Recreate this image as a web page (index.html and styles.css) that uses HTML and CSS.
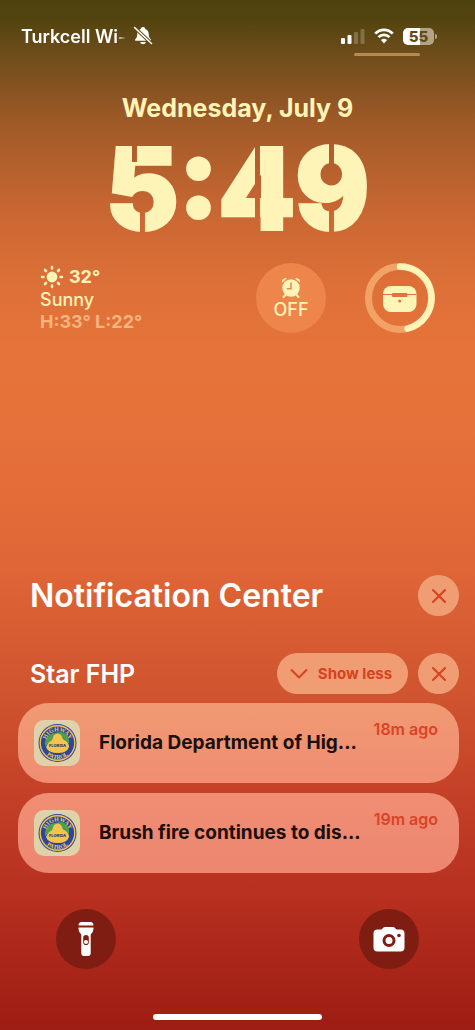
FILE: index.html
```html
<!DOCTYPE html>
<html lang="en">
<head>
    <meta charset="UTF-8">
    <meta name="viewport" content="width=device-width, initial-scale=1.0">
    <title>Lock Screen</title>
    <link rel="stylesheet" href="styles.css">
</head>
<body>

<header class="status-bar">
    <div class="status-left">
        <span class="carrier">Turkcell Wi-</span>
        <svg width="20" height="20" viewBox="0 0 20 20" aria-label="Silent">
            <path d="M10 1C8.600 1 7.800 1.900 7.700 3C5 3.900 4.300 6.200 4.200 8.500C4.100 11 3.500 12 2.300 13.200C1.700 14 2 14.800 3 14.800H17C18 14.800 18.300 14 17.700 13.200C16.500 12 15.900 11 15.800 8.500C15.700 6.200 15 3.900 12.300 3C12.200 1.900 11.400 1 10 1Z" fill="#fff"/>
            <path d="M7.200 16H12.800C12.400 17.500 11.400 18.200 10 18.200S7.600 17.500 7.200 16Z" fill="#fff"/>
            <path d="M1.500 1.500L18.500 17.500" stroke="#65491a" stroke-width="3.600"/>
            <path d="M1.500 1.500L18.500 17.500" stroke="#fff" stroke-width="1.600" stroke-linecap="round"/>
        </svg>
    </div>
    <div class="status-right">
        <svg width="24" height="18" viewBox="0 0 24 18" aria-label="Signal">
            <rect x="0" y="11" width="4" height="6" rx="1" fill="#fff"/>
            <rect x="6.500" y="8" width="4" height="9" rx="1" fill="#fff"/>
            <rect x="13" y="5" width="4" height="12" rx="1" fill="#fff" fill-opacity=".22"/>
            <rect x="19.500" y="2" width="4" height="15" rx="1" fill="#fff" fill-opacity=".22"/>
        </svg>
        <svg width="20" height="16" viewBox="0 0 20 16" aria-label="Wi-Fi">
            <path d="M1.200 5.700C6 .5 14 .5 18.800 5.700" fill="none" stroke="#fff" stroke-width="2.700"/>
            <path d="M4.500 9.100C7.500 6 12.500 6 15.500 9.100" fill="none" stroke="#fff" stroke-width="2.700"/>
            <path d="M6.900 12.100C8.700 10.400 11.300 10.400 13.100 12.100L10 15.400Z" fill="#fff"/>
        </svg>
        <div class="battery"><span>55</span></div>
    </div>
</header>
<div class="status-line"></div>

<main class="lock-screen">
    <div class="date">Wednesday, July 9</div>
    <time class="clock" datetime="05:49"><span class="digit five">5</span><span class="colon">:</span><span class="digit four">4</span><span class="digit nine">9</span></time>

    <section class="widgets">
        <div class="weather">
            <div class="weather-now">
                <svg width="24" height="24" viewBox="0 0 24 24" aria-hidden="true">
                    <circle cx="12" cy="12" r="5.400" fill="#fff4b8"/>
                    <path d="M12 2V3.500M12 20.500V22M2 12H3.500M20.500 12H22M5 5L6 6M18 18L19 19M19 5L18 6M6 18L5 19" stroke="#fff4b8" stroke-width="2.600" stroke-linecap="round"/>
                </svg>
                <span>32°</span>
            </div>
            <div class="weather-text">Sunny</div>
            <div class="weather-range">H:33° L:22°</div>
        </div>
        <div class="alarm">
            <svg width="20" height="22" viewBox="0 0 20 22" aria-label="Alarm">
                <path d="M1.200 5.500C0 3 3 .3 6 1.500ZM18.800 5.500C20 3 17 .3 14 1.500Z" fill="#fff4b8"/>
                <path d="M4.500 18L2.500 20M15.500 18L17.500 20" stroke="#fff4b8" stroke-width="2" stroke-linecap="round"/>
                <circle cx="10" cy="11" r="8.700" fill="#fff4b8"/>
                <path d="M10 6V11.700H6.300" fill="none" stroke="#ee864c" stroke-width="1.500" stroke-linecap="round"/>
            </svg>
            <span>OFF</span>
        </div>
        <svg class="earbuds" viewBox="0 0 70 70" aria-label="Earbuds battery">
            <circle cx="35" cy="35" r="31.500" fill="none" stroke="#f2a265" stroke-width="7"/>
            <path d="M35 3.500A31.500 31.500 0 0 1 42.500 65.600" fill="none" stroke="#fff4b8" stroke-width="6.500" stroke-linecap="round"/>
            <rect x="18" y="23" width="33.500" height="26" rx="8" fill="#fff4b8"/>
            <path d="M18 31.500H51.500" stroke="#e4723a" stroke-width="1"/>
            <rect x="27" y="30" width="15.500" height="4" rx="1" fill="#e4723a"/>
            <circle cx="34.700" cy="38" r="1.500" fill="#e4723a"/>
        </svg>
    </section>

    <section class="notifications">
        <div class="center-header">
            <h1>Notification Center</h1>
            <button class="round-button" aria-label="Clear all">
                <svg width="16" height="16" viewBox="0 0 16 16">
                    <path d="M2 2L14 14M14 2L2 14" fill="none" stroke="currentColor" stroke-width="2" stroke-linecap="round"/>
                </svg>
            </button>
        </div>
        <div class="group-header">
            <h2>Star FHP</h2>
            <button class="show-less">
                <svg width="18" height="12" viewBox="0 0 18 12" aria-hidden="true">
                    <path d="M1.500 2L9 9.500L16.500 2" fill="none" stroke="currentColor" stroke-width="2" stroke-linecap="round" stroke-linejoin="round"/>
                </svg>
                Show less
            </button>
            <button class="round-button" aria-label="Clear Star FHP">
                <svg width="16" height="16" viewBox="0 0 16 16">
                    <path d="M2 2L14 14M14 2L2 14" fill="none" stroke="currentColor" stroke-width="2" stroke-linecap="round"/>
                </svg>
            </button>
        </div>
        <article class="card">
            <svg class="app-icon" viewBox="0 0 46 46" aria-hidden="true">
                <g id="seal">
                    <path id="arc-top" d="M11.700 23A11.800 11.800 0 0 1 35.300 23" fill="none"/>
                    <path id="arc-bottom" d="M7.300 23A16.200 16.200 0 0 0 39.700 23" fill="none"/>
                    <circle cx="23.500" cy="23" r="19" fill="#2f459c"/>
                    <circle cx="23.500" cy="23" r="17.300" fill="#2c469f" stroke="#f0c452" stroke-width="1.400"/>
                    <path d="M11 26C10 19 15 14 20 13L27 12C33 14 36 18 35 24L31 20L26 16L20 17L16 22Z" fill="#4da24a"/>
                    <path d="M20 15Q24 12 27 15L29 19Q35 22 35 27Q33 33 24 33Q14 33 12 27Q14 22 18 20Z" fill="#f4c44c"/>
                    <text class="seal-ring"><textPath href="#arc-top" startOffset="50%" text-anchor="middle">HIGHWAY</textPath></text>
                    <text class="seal-ring"><textPath href="#arc-bottom" startOffset="50%" text-anchor="middle">PATROL</textPath></text>
                    <text class="seal-name" x="23.500" y="27" text-anchor="middle">FLORIDA</text>
                </g>
            </svg>
            <div class="card-title">Florida Department of Hig...</div>
            <time class="card-time">18m ago</time>
        </article>
        <article class="card card-second">
            <svg class="app-icon" viewBox="0 0 46 46" aria-hidden="true"><use href="#seal"/></svg>
            <div class="card-title">Brush fire continues to dis...</div>
            <time class="card-time">19m ago</time>
        </article>
    </section>
</main>

<footer class="dock">
    <button class="dock-button" aria-label="Flashlight">
        <svg width="36" height="36" viewBox="0 0 36 36">
            <path d="M10.500 4.500Q10.500 1 13.500 1H22.500Q25.500 1 25.500 4.500ZM10.500 6.500H25.500V8Q25.500 10.500 22.700 13.500V32Q22.700 35 20 35H16Q13.300 35 13.300 32V13.500Q10.500 10.500 10.500 8Z" fill="#fff"/>
            <rect x="15.200" y="14" width="5.600" height="10" rx="2.800" fill="#801d13"/>
            <circle cx="18" cy="21" r="2" fill="#fff"/>
        </svg>
    </button>
    <button class="dock-button" aria-label="Camera">
        <svg width="36" height="36" viewBox="0 0 36 36">
            <path d="M6.500 8.500H10.500L12.500 6.500Q13 6 14 6H22Q23 6 23.500 6.500L25.500 8.500H29.500Q33.500 8.500 33.500 12.500V26.500Q33.500 30.500 29.500 30.500H6.500Q2.500 30.500 2.500 26.500V12.500Q2.500 8.500 6.500 8.500Z" fill="#fff"/>
            <circle cx="18" cy="19.500" r="5" fill="#fff" stroke="#801d13" stroke-width="3"/>
            <circle cx="28" cy="14.500" r="1.800" fill="#801d13"/>
        </svg>
    </button>
</footer>
<div class="home-bar"></div>

</body>
</html>
```

FILE: styles.css
```css
* {
    box-sizing: border-box;
}
body {
    font-family: Inter, "Liberation Sans", sans-serif;
    display: flex;
    flex-direction: column;
    min-height: 100vh;
    margin: 0;
    color: #fff;
    background: linear-gradient(#4d430f 0%, #54440f 2%, #6c4c1a 5%, #a05a28 12%, #c76632 20%, #dc6f38 27%, #e6743a 34%, #e6713a 42%, #df6637 55%, #cf532f 68%, #c13d26 79%, #b73020 87%, #9d1c13 100%);
}
button {
    font-family: inherit;
    border: none;
    padding: 0;
    cursor: pointer;
}
svg {
    display: block;
}

/* Status bar */
.status-bar {
    display: flex;
    justify-content: space-between;
    align-items: center;
    height: 20px;
    margin: 26px 40px 0 21px;
}
.status-left {
    display: flex;
    align-items: center;
    gap: 7px;
}
.carrier {
    font-size: 18px;
    font-weight: 600;
    white-space: nowrap;
    -webkit-mask-image: linear-gradient(90deg, #000 91%, transparent);
    mask-image: linear-gradient(90deg, #000 91%, transparent);
}
.status-right {
    display: flex;
    align-items: center;
    gap: 9px;
}
.battery {
    position: relative;
    width: 31px;
    height: 17px;
    margin-right: 1px;
    border-radius: 5px;
    background: linear-gradient(90deg, #fff 55%, #b3a486 55%);
    color: #604a18;
    font-size: 15px;
    font-weight: 800;
    line-height: 17px;
    text-align: center;
}
.battery::after {
    content: "";
    position: absolute;
    left: 32px;
    top: 6px;
    width: 2px;
    height: 5px;
    border-radius: 0 2px 2px 0;
    background: #b3a486;
}
.status-line {
    align-self: flex-end;
    width: 66px;
    height: 3px;
    margin: 7px 55px 0 0;
    border-radius: 2px;
    background: #b78a50;
}

/* Date and clock */
.lock-screen {
    display: flex;
    flex-direction: column;
    flex: 1;
}
.date {
    margin-top: 36px;
    color: #fff4b8;
    font-size: 25px;
    font-weight: 700;
    line-height: 32px;
    text-align: center;
}
.clock {
    display: flex;
    justify-content: center;
    margin-top: 14px;
    color: #fff4b8;
    font-size: 112px;
    font-weight: 800;
    line-height: 100px;
    -webkit-text-stroke: 4px #fff4b8;
}
.colon {
    font-feature-settings: "case";
}
/* Stencil cuts: each layer is a slot removed from the digit */
.digit {
    -webkit-mask-repeat: no-repeat;
    mask-repeat: no-repeat;
    -webkit-mask-composite: xor;
    mask-composite: exclude;
}
.five {
    mask-image: linear-gradient(#000, #000), linear-gradient(#000, #000), linear-gradient(#000, #000);
    mask-size: 5px 24px, 5px 30px, 100% 100%;
    mask-position: 26px 0, 34px 70px, 0 0;
}
.four {
    mask-image: linear-gradient(#000, #000), linear-gradient(#000, #000);
    mask-size: 5px 100%, 100% 100%;
    mask-position: 37px 0, 0 0;
}
.nine {
    mask-image: linear-gradient(#000, #000), linear-gradient(#000, #000), linear-gradient(#000, #000);
    mask-size: 5px 30px, 5px 30px, 100% 100%;
    mask-position: 34px 0, 34px 70px, 0 0;
}

/* Widgets */
.widgets {
    display: flex;
    align-items: center;
    margin: 25px 40px 0;
    color: #fff4b8;
}
.weather {
    flex: 1;
    padding-top: 2px;
    font-size: 18px;
    font-weight: 500;
    line-height: 22px;
}
.weather-now {
    display: flex;
    align-items: center;
    gap: 5px;
    font-weight: 700;
}
.weather-range {
    color: #f6b57c;
    font-weight: 700;
}
.alarm {
    display: flex;
    flex-direction: column;
    align-items: center;
    justify-content: center;
    gap: 1px;
    width: 70px;
    height: 70px;
    margin-right: 39px;
    border-radius: 50%;
    background: #ee864c;
    font-size: 18px;
    font-weight: 500;
    line-height: 20px;
}
.earbuds {
    width: 70px;
    height: 70px;
}

/* Notifications */
.notifications {
    margin: auto 16px 0 18px;
}
.center-header,
.group-header {
    display: flex;
    align-items: center;
    gap: 10px;
    margin-bottom: 9px;
    padding-left: 12px;
}
.center-header {
    margin-bottom: 37px;
}
h1,
h2 {
    flex: 1;
    margin: 0;
    font-size: 32px;
    font-weight: 600;
    line-height: 40px;
}
h2 {
    font-size: 25px;
}
.round-button,
.show-less {
    display: flex;
    align-items: center;
    justify-content: center;
    width: 41px;
    height: 41px;
    border-radius: 21px;
    background: #f09d73;
    color: #d9401f;
}
.show-less {
    gap: 10px;
    width: 131px;
    padding-right: 3px;
    font-size: 15px;
    font-weight: 700;
}
.card {
    display: flex;
    align-items: center;
    height: 80px;
    padding: 0 21px 0 16px;
    border-radius: 31px;
    background: linear-gradient(#f09a73, #f08d72);
}
.card-second {
    margin-top: 10px;
    background: linear-gradient(#f08e73, #ec8670);
}
.app-icon {
    width: 46px;
    height: 46px;
    border-radius: 10px;
    background: #dfd2ab;
}
.seal-ring {
    fill: #f0c858;
    font-family: "Liberation Serif", serif;
    font-size: 6px;
    font-weight: 700;
}
.seal-name {
    fill: #283b70;
    font-size: 4px;
    font-weight: 800;
}
.card-title {
    flex: 1;
    margin-left: 19px;
    padding-bottom: 2px;
    color: #1b0f0c;
    font-size: 19px;
    font-weight: 700;
    white-space: nowrap;
}
.card-time {
    align-self: flex-start;
    margin-top: 16px;
    color: #dc4225;
    font-size: 16px;
    font-weight: 600;
    line-height: 20px;
}

/* Bottom controls */
.dock {
    display: flex;
    justify-content: space-between;
    margin: 36px 56px 0;
}
.dock-button {
    display: flex;
    align-items: center;
    justify-content: center;
    width: 60px;
    height: 60px;
    border-radius: 50%;
    background: #801d13;
}
.home-bar {
    align-self: center;
    width: 169px;
    height: 6px;
    margin: 45px 0 10px;
    border-radius: 3px;
    background: #fff;
}
```
